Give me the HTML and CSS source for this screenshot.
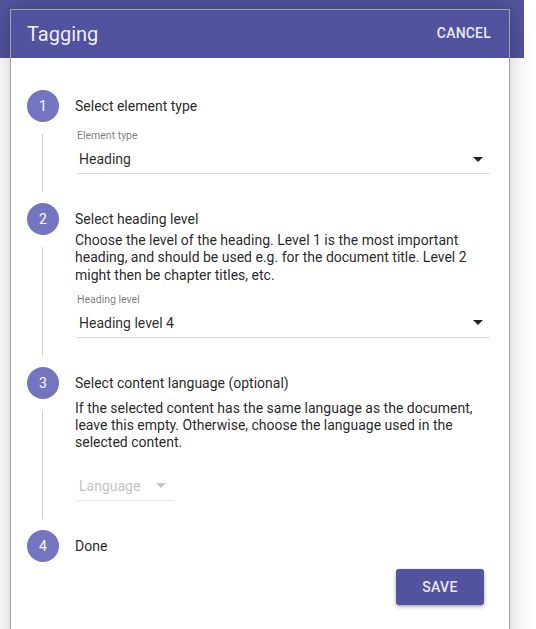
FILE: index.html
```html
<!DOCTYPE html>
<html lang="en">
<head>
<meta charset="utf-8">
<title>Tagging</title>
<link rel="stylesheet" href="styles.css">
</head>
<body>
<div class="appbar"></div>
<div class="dialog" role="dialog" aria-labelledby="dlg-title">
  <header class="dialog-header">
    <h1 id="dlg-title" class="dialog-title">Tagging</h1>
    <button class="btn-text" type="button">Cancel</button>
  </header>
  <div class="dialog-body">
    <ol class="stepper">
      <li class="step">
        <div class="rail"><span class="num">1</span><span class="line"></span></div>
        <div class="main">
          <div class="step-title">Select element type</div>
          <div class="field">
            <div class="field-label">Element type</div>
            <div class="select">
              <span class="select-value">Heading</span>
              <svg class="select-icon" viewBox="0 0 24 24" width="24" height="24"><path d="M7 10l5 5 5-5z"/></svg>
            </div>
          </div>
        </div>
      </li>
      <li class="step">
        <div class="rail"><span class="num">2</span><span class="line"></span></div>
        <div class="main">
          <div class="step-title">Select heading level</div>
          <p class="step-desc">Choose the level of the heading. Level 1 is the most important heading, and should be used e.g. for the document title. Level 2 might then be chapter titles, etc.</p>
          <div class="field">
            <div class="field-label">Heading level</div>
            <div class="select">
              <span class="select-value">Heading level 4</span>
              <svg class="select-icon" viewBox="0 0 24 24" width="24" height="24"><path d="M7 10l5 5 5-5z"/></svg>
            </div>
          </div>
        </div>
      </li>
      <li class="step">
        <div class="rail"><span class="num">3</span><span class="line"></span></div>
        <div class="main">
          <div class="step-title">Select content language (optional)</div>
          <p class="step-desc step-desc-loose">If the selected content has the same language as the document, leave this empty. Otherwise, choose the language used in the selected content.</p>
          <div class="field field-narrow">
            <div class="field-label"></div>
            <div class="select select-empty">
              <span class="select-value">Language</span>
              <svg class="select-icon" viewBox="0 0 24 24" width="24" height="24"><path d="M7 10l5 5 5-5z"/></svg>
            </div>
          </div>
        </div>
      </li>
      <li class="step step-last">
        <div class="rail"><span class="num">4</span></div>
        <div class="main">
          <div class="step-title">Done</div>
        </div>
      </li>
    </ol>
    <div class="actions">
      <button class="btn-save" type="button">Save</button>
    </div>
  </div>
</div>
</body>
</html>
```

FILE: styles.css
```css
* { box-sizing: border-box; }

html, body {
  margin: 0;
  padding: 0;
  height: 100%;
  overflow: hidden;
  background: #ffffff;
  font-family: Roboto, "Liberation Sans", Arial, sans-serif;
  color: rgba(0, 0, 0, 0.87);
}

.appbar {
  width: 524px;
  height: 58px;
  background: #51539e;
}

.dialog {
  position: absolute;
  left: 10px;
  top: 9px;
  width: 500px;
  min-height: 660px;
  background: #ffffff;
  border: 1px solid #a3a3a3;
  box-shadow: 0 0 22px rgba(0, 0, 0, 0.22);
}

.dialog-header {
  height: 48px;
  background: #51539e;
  display: flex;
  align-items: center;
  justify-content: space-between;
  padding: 0 10px 0 16px;
}

.dialog-title {
  margin: 0;
  font-size: 20px;
  font-weight: 400;
  line-height: 48px;
  color: rgba(255, 255, 255, 0.92);
}

.btn-text {
  border: 0;
  background: transparent;
  font-family: inherit;
  font-size: 14px;
  font-weight: 500;
  letter-spacing: 0.2px;
  text-transform: uppercase;
  color: rgba(255, 255, 255, 0.9);
  padding: 6px 8px;
  margin-top: -2px;
}

.dialog-body {
  padding: 32px 16px 40px 16px;
}

.stepper {
  list-style: none;
  margin: 0;
  padding: 0;
}

.step {
  display: grid;
  grid-template-columns: 32px 1fr;
  column-gap: 16px;
  padding-bottom: 29px;
}

.step-last {
  padding-bottom: 0;
}

.rail {
  display: flex;
  flex-direction: column;
  margin-bottom: -29px;
}

.step-last .rail { margin-bottom: 0; }

.num {
  width: 32px;
  height: 32px;
  border-radius: 50%;
  background: #7475c1;
  color: #ffffff;
  font-size: 14px;
  line-height: 32px;
  text-align: center;
  flex: none;
}

.line {
  flex: 1;
  width: 1px;
  margin: 12px 0 11px 15px;
  background: #cfcfcf;
}

.main {
  min-width: 0;
}

.step-title {
  height: 32px;
  display: flex;
  align-items: center;
  font-size: 14px;
}

.step-desc {
  margin: -3px 0 0 0;
  font-size: 14px;
  line-height: 17.25px;
}

.step-desc-loose {
  margin-top: 1px;
}

.field {
  margin: 8px 3px 0 2px;
}

.step-desc + .field {
  margin-top: 10px;
}

.step-desc + .field-narrow {
  margin-top: 5px;
}

.field-narrow {
  width: 96px;
}

.field-label {
  height: 12px;
  font-size: 10.5px;
  line-height: 12px;
  color: rgba(0, 0, 0, 0.54);
}

.select {
  position: relative;
  display: flex;
  align-items: center;
  height: 32px;
  padding: 8px 0 4px 2px;
  border-bottom: 1px solid #dadada;
}

.select-value {
  flex: 1;
  font-size: 14px;
  line-height: 19px;
  color: rgba(0, 0, 0, 0.85);
}

.select-icon {
  flex: none;
  margin-top: -2px;
  fill: rgba(0, 0, 0, 0.87);
}

.select-empty {
  border-bottom-color: #e3e3e3;
}

.select-empty .select-value {
  color: #c4c4c4;
}

.select-empty .select-icon {
  fill: #c4c4c4;
}

.actions {
  display: flex;
  justify-content: flex-end;
  padding-right: 9px;
  margin-top: 7px;
}

.btn-save {
  width: 88px;
  height: 36px;
  border: 0;
  border-radius: 3px;
  background: #51539e;
  color: rgba(255, 255, 255, 0.9);
  font-family: inherit;
  font-size: 14px;
  font-weight: 500;
  letter-spacing: 0.3px;
  text-transform: uppercase;
  box-shadow: 0 2px 4px rgba(0, 0, 0, 0.25), 0 1px 2px rgba(0, 0, 0, 0.15);
}
```
